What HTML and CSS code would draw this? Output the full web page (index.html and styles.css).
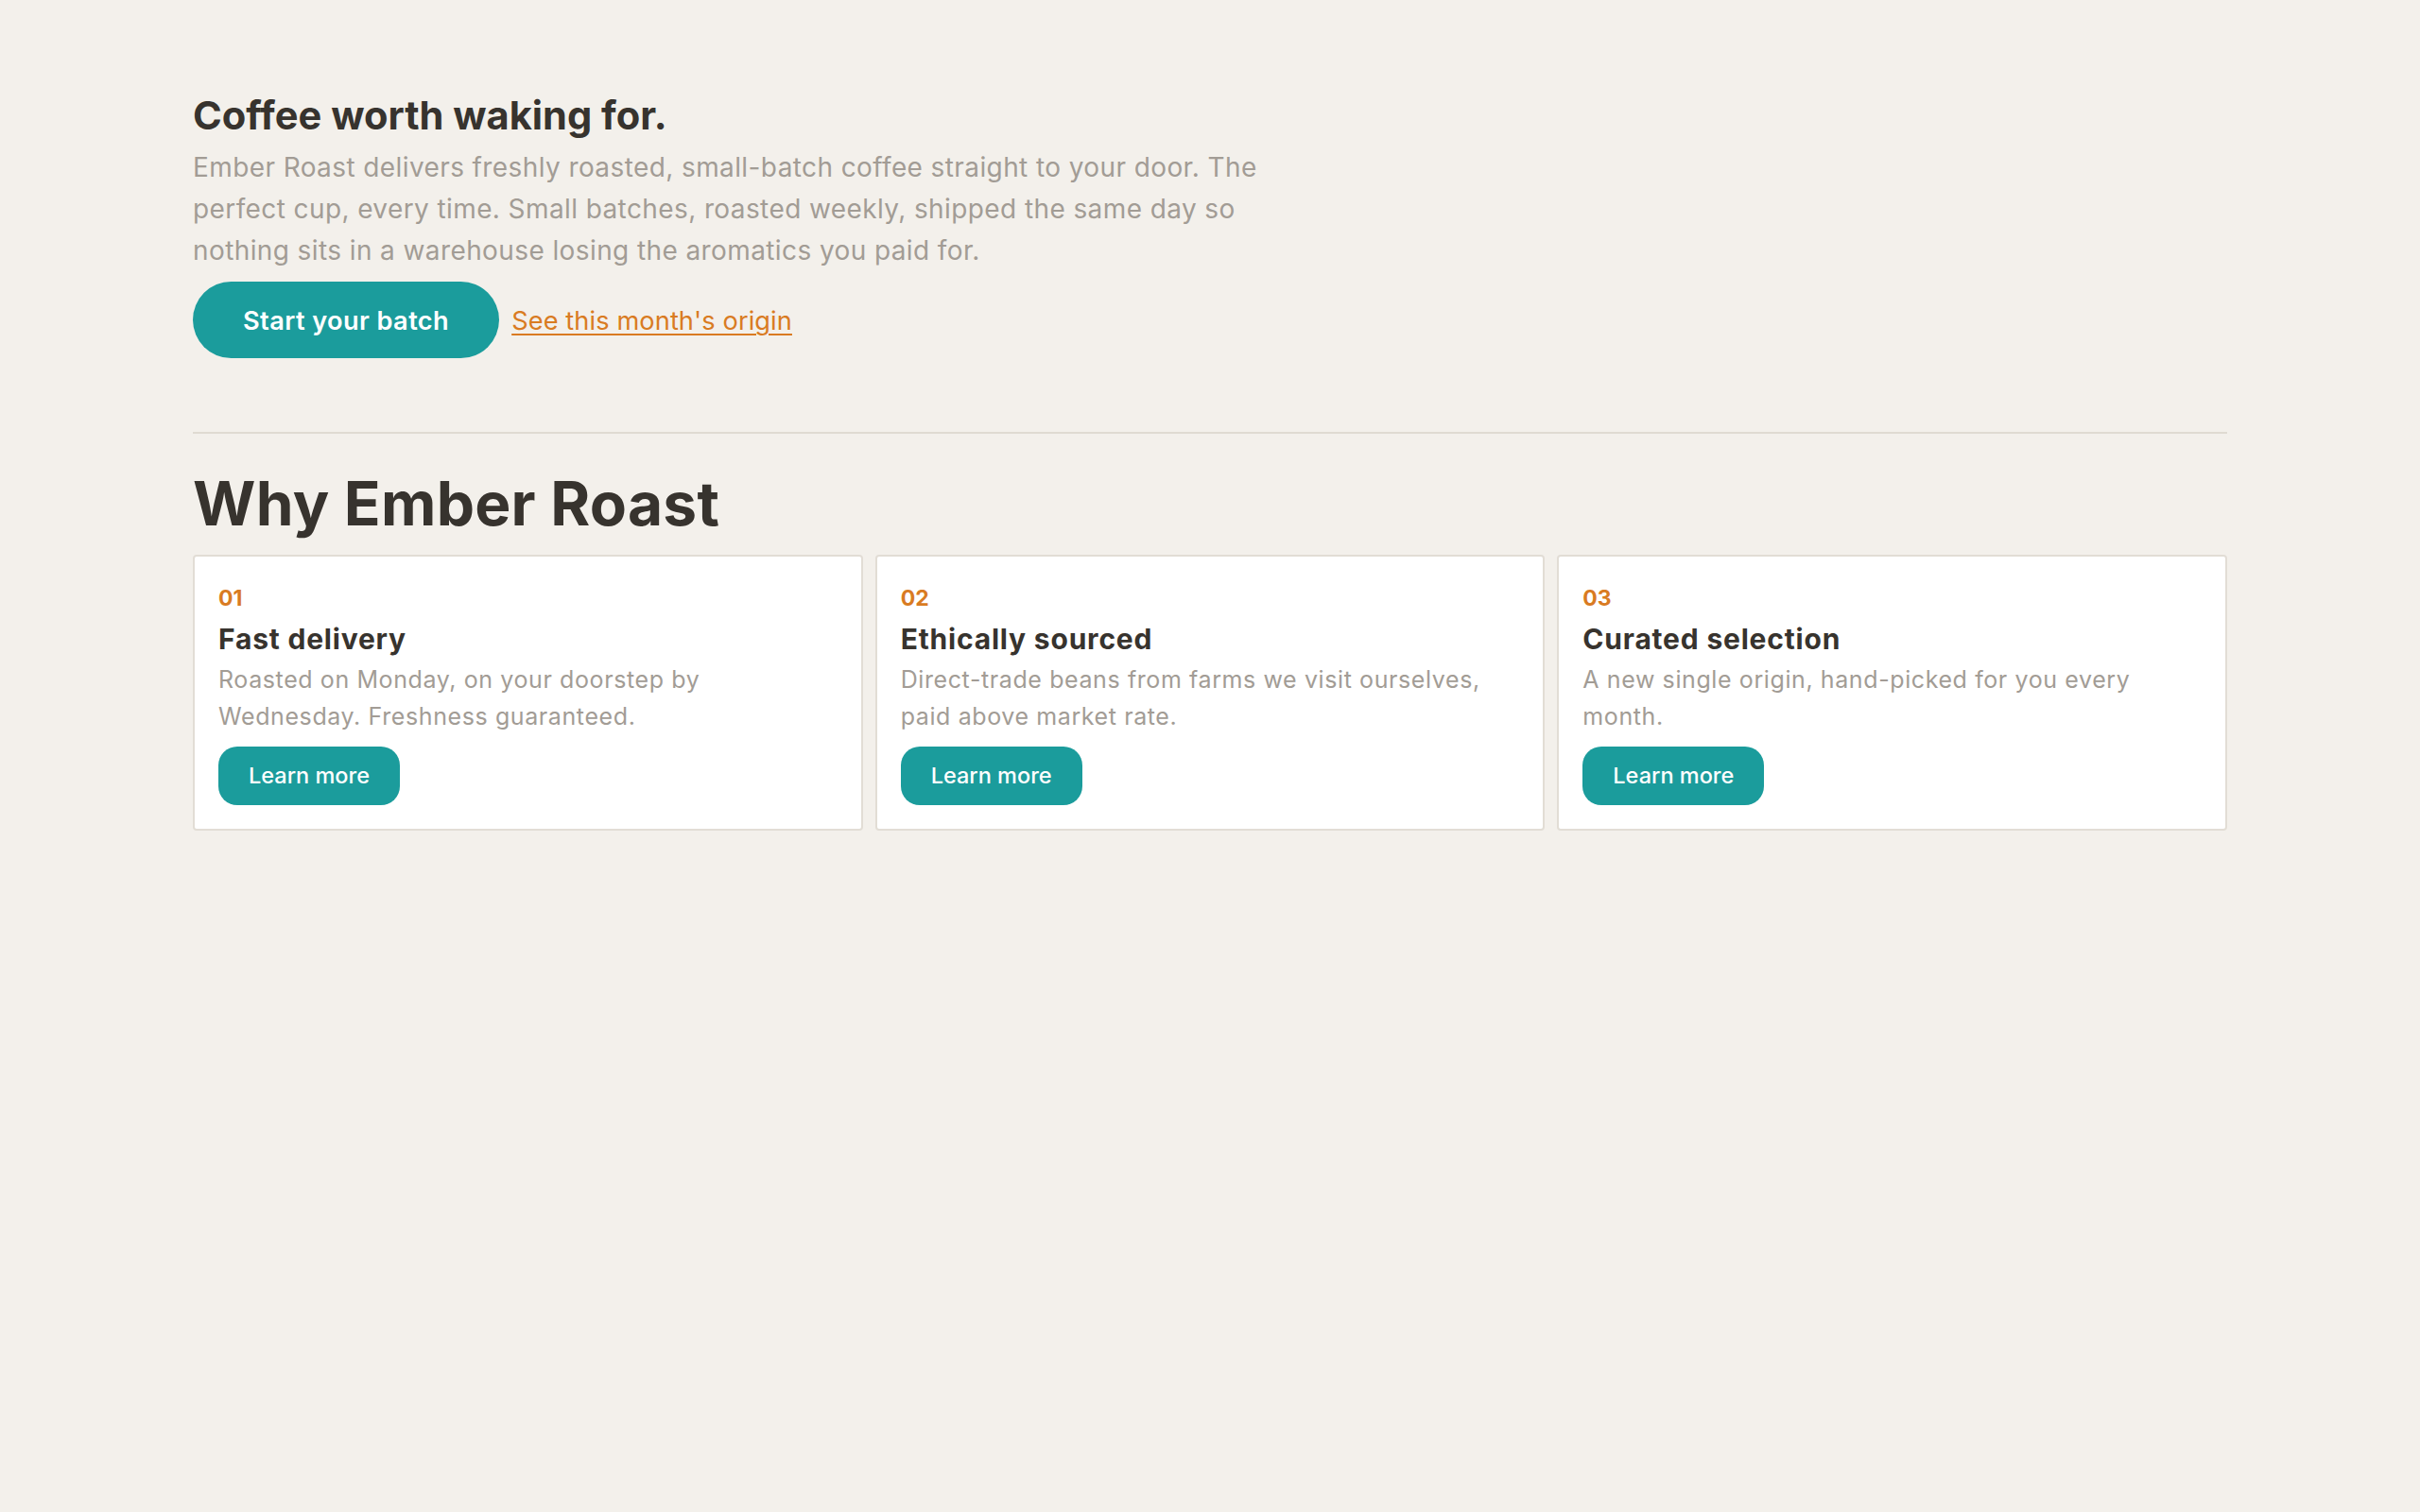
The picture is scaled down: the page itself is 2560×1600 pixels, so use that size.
FILE: index.html
```html
<!DOCTYPE html>
<html lang="en">
<head>
<meta charset="utf-8">
<title>Ember Roast</title>
<link rel="stylesheet" href="styles.css">
</head>
<body>
<main class="page">
  <section class="hero">
    <h1 class="hero-title">Coffee worth waking for.</h1>
    <p class="hero-text">Ember Roast delivers freshly roasted, small-batch coffee straight to your door. The perfect cup, every time. Small batches, roasted weekly, shipped the same day so nothing sits in a warehouse losing the aromatics you paid for.</p>
    <div class="hero-actions">
      <a class="btn-primary" href="#">Start your batch</a>
      <a class="link" href="#">See this month's origin</a>
    </div>
  </section>
  <hr class="divider">
  <section class="why">
    <h2 class="why-title">Why Ember Roast</h2>
    <div class="cards">
      <article class="card">
        <div class="card-num">01</div>
        <h3 class="card-title">Fast delivery</h3>
        <p class="card-text">Roasted on Monday, on your doorstep by Wednesday. Freshness guaranteed.</p>
        <a class="btn-small" href="#">Learn more</a>
      </article>
      <article class="card">
        <div class="card-num">02</div>
        <h3 class="card-title">Ethically sourced</h3>
        <p class="card-text">Direct-trade beans from farms we visit ourselves, paid above market rate.</p>
        <a class="btn-small" href="#">Learn more</a>
      </article>
      <article class="card">
        <div class="card-num">03</div>
        <h3 class="card-title">Curated selection</h3>
        <p class="card-text">A new single origin, hand-picked for you every month.</p>
        <a class="btn-small" href="#">Learn more</a>
      </article>
    </div>
  </section>
</main>
</body>
</html>
```

FILE: styles.css
```css
* { box-sizing: border-box; }
html, body {
  margin: 0;
  padding: 0;
  background: #f3f0eb;
}
body {
  font-family: Inter, "Noto Sans", "Liberation Sans", sans-serif;
  color: #37332e;
}
.page {
  max-width: 2152px;
  margin: 0 auto;
  padding-top: 98px;
}
.hero-title {
  margin: 0 0 7px;
  font-size: 41.6px;
  line-height: 1.2;
  font-weight: 700;
  letter-spacing: 0;
  color: #37332e;
}
.hero-text {
  margin: 0;
  max-width: 1152px;
  font-size: 28px;
  line-height: 44px;
  letter-spacing: 0.4px;
  color: #a29c95;
}
.hero-actions {
  display: flex;
  align-items: center;
  gap: 13px;
  margin-top: 11px;
}
.btn-primary {
  display: inline-block;
  background: #1b9c9c;
  color: #ffffff;
  text-decoration: none;
  font-size: 27.2px;
  font-weight: 600;
  line-height: 1.2;
  letter-spacing: 0.4px;
  padding: 26px 53px 22px;
  border-radius: 999px;
}
.link {
  color: #d97b22;
  font-size: 27.2px;
  line-height: 1.2;
  letter-spacing: 0.1px;
  text-decoration: underline;
  text-underline-offset: 4px;
  text-decoration-thickness: 2px;
  padding-top: 5px;
}
.divider {
  border: 0;
  border-top: 2px solid #dfdad2;
  margin: 78px 0 36px;
  height: 0;
}
.why-title {
  margin: 0 0 16px;
  font-size: 64px;
  line-height: 1.2;
  font-weight: 700;
  letter-spacing: 0.25px;
  color: #37332e;
}
.cards {
  display: grid;
  grid-template-columns: repeat(3, 1fr);
  gap: 13px;
}
.card {
  display: flex;
  flex-direction: column;
  align-items: flex-start;
  background: #ffffff;
  border: 2px solid #e2ddd5;
  border-radius: 4px;
  padding: 27px 25px 25px;
}
.card-num {
  font-size: 23px;
  line-height: 1.5;
  font-weight: 700;
  color: #d97b22;
}
.card-title {
  margin: 6px 0 4px;
  font-size: 30px;
  line-height: 1.3;
  font-weight: 700;
  color: #37332e;
  letter-spacing: 0.8px;
}
.card-text {
  margin: 0 0 11px;
  font-size: 25px;
  line-height: 39.5px;
  letter-spacing: 0.6px;
  color: #a29c95;
}
.btn-small {
  display: inline-block;
  margin-top: auto;
  background: #1b9c9c;
  color: #ffffff;
  text-decoration: none;
  font-size: 23.5px;
  font-weight: 500;
  line-height: 1.2;
  padding: 17px 32px;
  border-radius: 20px;
}
```
